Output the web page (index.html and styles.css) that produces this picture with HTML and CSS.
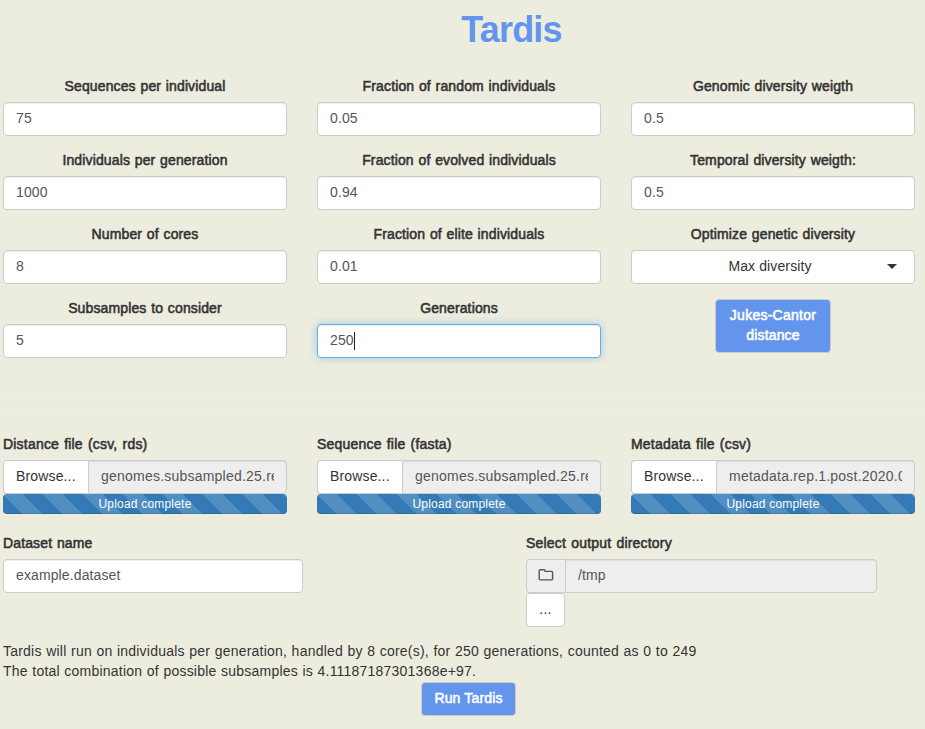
FILE: index.html
```html
<!DOCTYPE html>
<html lang="en">
<head>
<meta charset="utf-8">
<title>Tardis</title>
<link rel="stylesheet" href="styles.css">
</head>
<body>
<h1 class="title"><span>Tardis</span></h1>
<main>
  <section class="grid params">
    <div class="field"><label><span>Sequences per individual</span></label><div class="control"><span>75</span></div></div>
    <div class="field"><label><span>Fraction of random individuals</span></label><div class="control"><span>0.05</span></div></div>
    <div class="field"><label><span>Genomic diversity weigth</span></label><div class="control"><span>0.5</span></div></div>
    <div class="field"><label><span>Individuals per generation</span></label><div class="control"><span>1000</span></div></div>
    <div class="field"><label><span>Fraction of evolved individuals</span></label><div class="control"><span>0.94</span></div></div>
    <div class="field"><label><span>Temporal diversity weigth:</span></label><div class="control"><span>0.5</span></div></div>
    <div class="field"><label><span>Number of cores</span></label><div class="control"><span>8</span></div></div>
    <div class="field"><label><span>Fraction of elite individuals</span></label><div class="control"><span>0.01</span></div></div>
    <div class="field"><label><span>Optimize genetic diversity</span></label><div class="control select"><span>Max diversity</span><i class="caret"></i></div></div>
    <div class="field"><label><span>Subsamples to consider</span></label><div class="control"><span>5</span></div></div>
    <div class="field"><label><span>Generations</span></label><div class="control focused"><span>250</span><i class="cursor"></i></div></div>
    <div class="field"><button class="primary jukes">Jukes-Cantor<br>distance</button></div>
  </section>
  <hr><hr>
  <section class="grid files">
    <div class="file"><label><span>Distance file (csv, rds)</span></label>
      <div class="group"><div class="browse">Browse...</div><div class="control readonly"><span class="clip">genomes.subsampled.25.re</span></div></div>
      <div class="progress">Upload complete</div></div>
    <div class="file"><label><span>Sequence file (fasta)</span></label>
      <div class="group"><div class="browse">Browse...</div><div class="control readonly"><span class="clip">genomes.subsampled.25.re</span></div></div>
      <div class="progress">Upload complete</div></div>
    <div class="file"><label><span>Metadata file (csv)</span></label>
      <div class="group"><div class="browse">Browse...</div><div class="control readonly"><span class="clip meta">metadata.rep.1.post.2020.0</span></div></div>
      <div class="progress">Upload complete</div></div>
  </section>
  <section class="output">
    <div class="dataset"><label><span>Dataset name</span></label><div class="control"><span>example.dataset</span></div></div>
    <div class="directory"><label><span>Select output directory</span></label>
      <div class="group"><div class="addon"><svg width="16" height="14" viewBox="0 0 16 14"><path d="M1.2 10.7V3Q1.2 1.7 2.5 1.7h3.4Q7 1.7 7.3 3.4H13.2Q14.6 3.4 14.6 4.6v6.1Q14.6 11.9 13.2 11.9H2.5Q1.2 11.9 1.2 10.7Z" fill="none" stroke="#555" stroke-width="1.4"/></svg></div><div class="control readonly"><span>/tmp</span></div></div>
      <button class="more">...</button></div>
  </section>
  <p class="summary">Tardis will run on individuals per generation, handled by 8 core(s), for 250 generations, counted as 0 to 249<br>The total combination of possible subsamples is 4.11187187301368e+97.</p>
  <div class="run"><button class="primary">Run Tardis</button></div>
</main>
</body>
</html>
```
FILE: styles.css
```css
* { box-sizing: border-box; }
body {
  margin: 0;
  background: #ededdf;
  color: #333;
  font: 14px/20px "Liberation Sans", Arial, sans-serif;
  overflow: hidden;
}
.title {
  margin: 0;
  padding: 10px 0 0 98px;
  height: 77px;
  text-align: center;
  color: #6495ed;
  font-size: 36px;
  line-height: 40px;
  font-weight: bold;
  letter-spacing: -0.8px;
}
main { width: 912px; margin-left: 3px; }
.grid { display: grid; grid-template-columns: repeat(3, 284px); column-gap: 30px; }
.params { height: 316px; grid-auto-rows: 74px; text-align: center; }
label {
  display: block;
  height: 25px;
  line-height: 18px;
  letter-spacing: 0.13px;
  word-spacing: 0.7px;
  -webkit-text-stroke: 0.55px #333;
}
.files label, .directory label { letter-spacing: 0.2px; word-spacing: 1px; }
.control {
  display: flex;
  align-items: center;
  height: 34px;
  padding: 0 12px 2px;
  border: 1px solid #ccc;
  border-radius: 4px;
  background: #fff;
  color: #555;
  box-shadow: inset 0 1px 1px rgba(0, 0, 0, .075);
  white-space: pre;
  letter-spacing: 0.12px;
}
.focused {
  border-color: #66afe9;
  box-shadow: inset 0 1px 1px rgba(0, 0, 0, .075), 0 0 8px rgba(102, 175, 233, .6);
}
.cursor { width: 1px; height: 18px; margin-top: 2px; background: #222; }
.select { color: #333; box-shadow: none; }
.select span { flex: 1; padding-right: 4px; padding-left: 13px; }
.caret { margin-right: 5px; border: 5px solid transparent; border-top-color: #333; border-bottom: 0; }
button { font: inherit; border: 1px solid #ccc; border-radius: 4px; color: #333; background: #fff; padding: 4px 12px 8px; }
.primary { background: #6495ed; color: #fff; letter-spacing: 0.15px; -webkit-text-stroke: 0.55px #fff; }
.jukes { display: block; width: 116px; height: 54px; margin: 0 auto; padding: 5px 0 7px; }
.jukes::first-line { letter-spacing: 0.25px; }
hr { margin: 0 -10px 20px -3px; border: 0; border-top: 1px solid #eee; }
.files { height: 99px; }
.group { display: flex; }
.group > :first-child { border: 1px solid #ccc; border-right: 0; border-radius: 4px 0 0 4px; }
.group .control { flex: 1; min-width: 0; border-radius: 0 4px 4px 0; }
.browse { width: 85px; height: 34px; padding: 5px 0 0 12px; background: #fff; letter-spacing: 0.15px; }
.readonly { background: #eee; }
.clip { overflow: hidden; letter-spacing: 0.22px; }
.progress {
  height: 20px;
  border-radius: 4px;
  color: #fff;
  font-size: 12px;
  text-align: center;
  letter-spacing: 0.2px;
  background: #337ab7 linear-gradient(45deg, rgba(255,255,255,.15) 25%, transparent 25%, transparent 50%, rgba(255,255,255,.15) 50%, rgba(255,255,255,.15) 75%, transparent 75%) 0 0 / 40px 40px;
  box-shadow: inset 0 -1px 1px rgba(0, 0, 0, .15);
}
.output { display: flex; height: 107px; }
.dataset { width: 300px; margin-right: 223px; }
.directory { width: 351px; }
.addon { display: flex; align-items: center; justify-content: center; width: 39px; padding-bottom: 2px; background: #eee; }
.more { display: block; width: 39px; height: 34px; padding: 5px 0 7px; letter-spacing: 0.3px; }
.summary { margin: 0; height: 41px; letter-spacing: 0.22px; word-spacing: 0.4px; white-space: nowrap; }
.run { padding-left: 418px; }
.run .primary { display: block; width: 95px; height: 34px; padding: 5px 0 7px; }
```
